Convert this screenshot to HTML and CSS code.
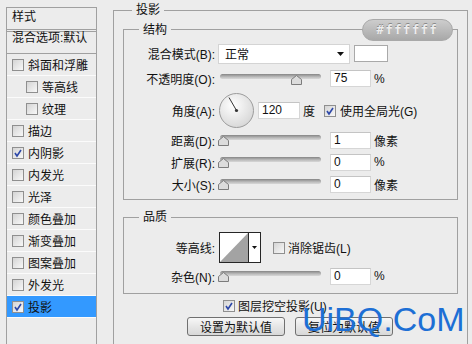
FILE: index.html
```html
<!DOCTYPE html>
<html lang="zh-CN">
<head>
  <meta charset="UTF-8">
  <meta name="viewport" content="width=device-width, initial-scale=1.0">
  <title>图层样式 - 投影</title>
  <link rel="stylesheet" href="styles.css">
</head>
<body>

  <div class="dialog">
    <!-- 左侧样式列表 -->
    <ul class="styles-list">
      <li class="list-head">样式</li>
      <li class="list-blend">混合选项:默认</li>
      <li class="list-item"><span class="cb"></span>斜面和浮雕</li>
      <li class="list-item sub"><span class="cb"></span>等高线</li>
      <li class="list-item sub"><span class="cb"></span>纹理</li>
      <li class="list-item"><span class="cb"></span>描边</li>
      <li class="list-item"><span class="cb"><svg width="10" height="10" viewBox="0 0 10 10"><path d="M2 5l2 3 4-6" fill="none" stroke="#2c47a8" stroke-width="1.6"/></svg></span>内阴影</li>
      <li class="list-item"><span class="cb"></span>内发光</li>
      <li class="list-item"><span class="cb"></span>光泽</li>
      <li class="list-item"><span class="cb"></span>颜色叠加</li>
      <li class="list-item"><span class="cb"></span>渐变叠加</li>
      <li class="list-item"><span class="cb"></span>图案叠加</li>
      <li class="list-item"><span class="cb"></span>外发光</li>
      <li class="list-item active"><span class="cb"><svg width="10" height="10" viewBox="0 0 10 10"><path d="M2 5l2 3 4-6" fill="none" stroke="#2c47a8" stroke-width="1.6"/></svg></span>投影</li>
    </ul>

    <!-- 投影设置 -->
    <div class="panel">
      <div class="group-head"><span class="group-title">投影</span></div>

      <div class="group struct">
        <div class="group-head">
          <span class="group-title">结构</span>
          <span class="hex-pill">#ffffff</span>
        </div>

        <div class="row r-blend">
          <span class="lbl">混合模式(B):</span>
          <div class="select">正常<svg width="7" height="4" viewBox="0 0 7 4"><path d="M0 0h7L3.5 4z" fill="#111"/></svg></div>
          <div class="swatch"></div>
        </div>

        <div class="row r-opacity">
          <span class="lbl">不透明度(O):</span>
          <div class="slider"><span class="track"></span><svg class="thumb" style="left: 71px" width="11" height="10" viewBox="0 0 11 10"><path d="M.5 4.5L5.5.5l5 4v5H.5z" fill="#dcdcdc" stroke="#7c7c7c"/></svg></div>
          <span class="num">75</span>
          <span class="unit">%</span>
        </div>

        <div class="row r-angle">
          <span class="lbl">角度(A):</span>
          <svg class="dial" width="35" height="35" viewBox="0 0 35 35">
            <defs>
              <radialGradient id="dialFill" cx="40%" cy="35%" r="70%">
                <stop offset="0" stop-color="#ffffff"/>
                <stop offset="1" stop-color="#d6d6d6"/>
              </radialGradient>
            </defs>
            <circle cx="17.5" cy="17.5" r="17" fill="url(#dialFill)" stroke="#9c9c9c"/>
            <path d="M17.5 17.5L10 4.5" stroke="#333" stroke-width="1"/>
            <circle cx="17.5" cy="17.5" r="1.6" fill="#333"/>
          </svg>
          <span class="num wide">120</span>
          <span class="unit">度</span>
          <span class="check-label global"><span class="cb"><svg width="10" height="10" viewBox="0 0 10 10"><path d="M2 5l2 3 4-6" fill="none" stroke="#2c47a8" stroke-width="1.6"/></svg></span>使用全局光(G)</span>
        </div>

        <div class="row">
          <span class="lbl">距离(D):</span>
          <div class="slider"><span class="track"></span><svg class="thumb" style="left: -2px" width="11" height="10" viewBox="0 0 11 10"><path d="M.5 4.5L5.5.5l5 4v5H.5z" fill="#dcdcdc" stroke="#7c7c7c"/></svg></div>
          <span class="num">1</span>
          <span class="unit">像素</span>
        </div>

        <div class="row">
          <span class="lbl">扩展(R):</span>
          <div class="slider"><span class="track"></span><svg class="thumb" style="left: -2px" width="11" height="10" viewBox="0 0 11 10"><path d="M.5 4.5L5.5.5l5 4v5H.5z" fill="#dcdcdc" stroke="#7c7c7c"/></svg></div>
          <span class="num">0</span>
          <span class="unit">%</span>
        </div>

        <div class="row">
          <span class="lbl">大小(S):</span>
          <div class="slider"><span class="track"></span><svg class="thumb" style="left: -2px" width="11" height="10" viewBox="0 0 11 10"><path d="M.5 4.5L5.5.5l5 4v5H.5z" fill="#dcdcdc" stroke="#7c7c7c"/></svg></div>
          <span class="num">0</span>
          <span class="unit">像素</span>
        </div>
      </div>

      <div class="group quality">
        <div class="group-head"><span class="group-title">品质</span></div>

        <div class="row r-contour">
          <span class="lbl">等高线:</span>
          <div class="contour">
            <svg class="contour-curve" width="28" height="29" viewBox="0 0 28 29"><path d="M0 29L28 0v29z" fill="#a3a3a3"/></svg>
            <span class="contour-drop"><svg width="5" height="3" viewBox="0 0 5 3"><path d="M0 0h5L2.5 3z" fill="#111"/></svg></span>
          </div>
          <span class="check-label antialias"><span class="cb"></span>消除锯齿(L)</span>
        </div>

        <div class="row r-noise">
          <span class="lbl">杂色(N):</span>
          <div class="slider"><span class="track"></span><svg class="thumb" style="left: -2px" width="11" height="10" viewBox="0 0 11 10"><path d="M.5 4.5L5.5.5l5 4v5H.5z" fill="#dcdcdc" stroke="#7c7c7c"/></svg></div>
          <span class="num">0</span>
          <span class="unit">%</span>
        </div>
      </div>

      <div class="row r-knock">
        <span class="check-label"><span class="cb"><svg width="10" height="10" viewBox="0 0 10 10"><path d="M2 5l2 3 4-6" fill="none" stroke="#2c47a8" stroke-width="1.6"/></svg></span>图层挖空投影(U)</span>
      </div>

      <div class="row r-buttons">
        <button class="btn">设置为默认值</button>
        <button class="btn">复位为默认值</button>
      </div>
    </div>
  </div>

  <div class="watermark">UiBQ.CoM</div>

</body>
</html>
```

FILE: styles.css
```css
body {
  margin: 0;
  background: #ececec;
  font-family: "Liberation Sans", "Noto Sans CJK SC", sans-serif;
  font-size: 12px;
  color: #111;
  overflow: hidden;
}
.dialog {
  display: flex;
  align-items: flex-start;
  height: 344px;
  overflow: hidden;
}

/* 左侧列表 */
.styles-list {
  list-style: none;
  margin: 7px 0 0 6px;
  padding: 0;
  width: 91px;
  height: 337px;
  box-sizing: border-box;
  border: 1px solid #a0a0a0;
  border-bottom: 0;
  flex: none;
}
.list-head {
  height: 21px;
  line-height: 18px;
  padding-left: 5px;
  border-bottom: 3px double #a0a0a0;
}
.list-blend {
  height: 21px;
  line-height: 13px;
  padding: 0 0 0 5px;
  border-bottom: 1px solid #a0a0a0;
  white-space: nowrap;
}
.list-item {
  display: flex;
  align-items: center;
  height: 21px;
  padding-left: 5px;
  border-bottom: 1px solid #fbfbfb;
  white-space: nowrap;
}
.list-item.sub {
  padding-left: 19px;
}
.list-item.active {
  background: #3399ff;
}
.list-item .cb {
  margin-right: 4px;
}

/* 复选框 */
.cb {
  display: inline-flex;
  align-items: center;
  justify-content: center;
  width: 12px;
  height: 12px;
  box-sizing: border-box;
  border: 1px solid #8f8f8f;
  background: linear-gradient(135deg, #d4d4d4, #f8f8f8);
  flex: none;
}
.check-label {
  display: flex;
  align-items: center;
  white-space: nowrap;
}
.check-label .cb {
  margin-right: 3px;
}
.global {
  margin-left: 9px;
}
.global .cb {
  margin-right: 4px;
}
.antialias {
  margin-left: 12px;
}

/* 右侧面板 */
.panel {
  margin: 10px 0 0 16px;
  width: 355px;
  height: 334px;
  box-sizing: border-box;
  border: 1px solid #a0a0a0;
  border-bottom: 0;
  padding: 0 9px;
  flex: none;
}
.group-head {
  display: flex;
  align-items: center;
  justify-content: space-between;
  height: 16px;
  margin-top: -9px;
}
.group-title {
  line-height: 16px;
  padding: 0 4px;
  margin-left: 9px;
  background: #ececec;
}
.group {
  border: 1px solid #a0a0a0;
}
.group .group-title {
  margin-left: 15px;
}
.struct {
  margin-top: 11px;
  padding-bottom: 4px;
}
.struct .group-head {
  height: 22px;
  margin-top: -11px;
  padding-right: 4px;
}
.hex-pill {
  width: 91px;
  height: 22px;
  border-radius: 11px;
  box-sizing: border-box;
  border: 1px solid #a9a9a9;
  background: linear-gradient(#cdcdcd, #a8a8a8);
  color: #ededed;
  text-shadow: 0 -1px 0 #8a8a8a;
  font: bold 12px "DejaVu Sans Mono", monospace;
  letter-spacing: 1.6px;
  display: flex;
  align-items: center;
  justify-content: center;
}
.quality {
  margin-top: 17px;
  padding-bottom: 6px;
}

/* 行 */
.row {
  display: flex;
  align-items: center;
  height: 22px;
  white-space: nowrap;
}
.r-blend {
  margin-top: 2px;
  height: 21px;
}
.r-opacity {
  margin-top: 4px;
  height: 21px;
}
.r-angle {
  margin-top: 3px;
  height: 37px;
}
.r-contour {
  margin-top: 7px;
  height: 31px;
}
.r-noise {
  margin-top: 2px;
}
.r-knock {
  margin-top: 2px;
  height: 19px;
  padding-left: 100px;
}
.r-buttons {
  margin-top: 2px;
  height: 19px;
  padding-left: 64px;
  gap: 10px;
}
.lbl {
  width: 91px;
  text-align: right;
  flex: none;
}

/* 控件 */
.select {
  margin-left: 3px;
  width: 132px;
  height: 20px;
  box-sizing: border-box;
  border: 1px solid #d4d4d4;
  background: #fff;
  display: flex;
  align-items: center;
  justify-content: space-between;
  padding: 0 5px 0 6px;
}
.swatch {
  margin-left: 4px;
  width: 34px;
  height: 17px;
  box-sizing: border-box;
  border: 1px solid #a9a9a9;
  background: #fff;
}
.slider {
  position: relative;
  margin-left: 5px;
  width: 101px;
  height: 12px;
  flex: none;
}
.track {
  display: block;
  margin-top: 1px;
  height: 5px;
  border-radius: 3px;
  background: linear-gradient(#858585, #bdbdbd 60%, #d8d8d8);
}
.thumb {
  position: absolute;
  top: 2px;
}
.num {
  margin-left: 9px;
  width: 41px;
  height: 17px;
  box-sizing: border-box;
  border: 1px solid #d6d6d6;
  border-top-color: #c4c4c4;
  background: #fff;
  padding-left: 3px;
  line-height: 15px;
  flex: none;
}
.num.wide {
  margin-left: 4px;
  width: 42px;
}
.unit {
  margin-left: 3px;
}
.dial {
  margin-left: 4px;
  flex: none;
}
.contour {
  margin-left: 4px;
  width: 42px;
  height: 31px;
  box-sizing: border-box;
  border: 1px solid #262626;
  background: #fff;
  display: flex;
  flex: none;
}
.contour-curve {
  display: block;
  border-right: 1px solid #262626;
}
.contour-drop {
  flex: 1;
  display: flex;
  align-items: center;
  justify-content: center;
}
.btn {
  width: 98px;
  height: 19px;
  box-sizing: border-box;
  border: 1px solid #707070;
  border-radius: 3px;
  background: linear-gradient(#f7f7f7, #e6e6e6 50%, #d8d8d8);
  font: inherit;
  color: #111;
  padding: 0;
}

/* 水印 */
.watermark {
  position: absolute;
  left: 302px;
  top: 302px;
  font: 34px/1 "Liberation Sans", sans-serif;
  color: #1d6fd5;
}
```
